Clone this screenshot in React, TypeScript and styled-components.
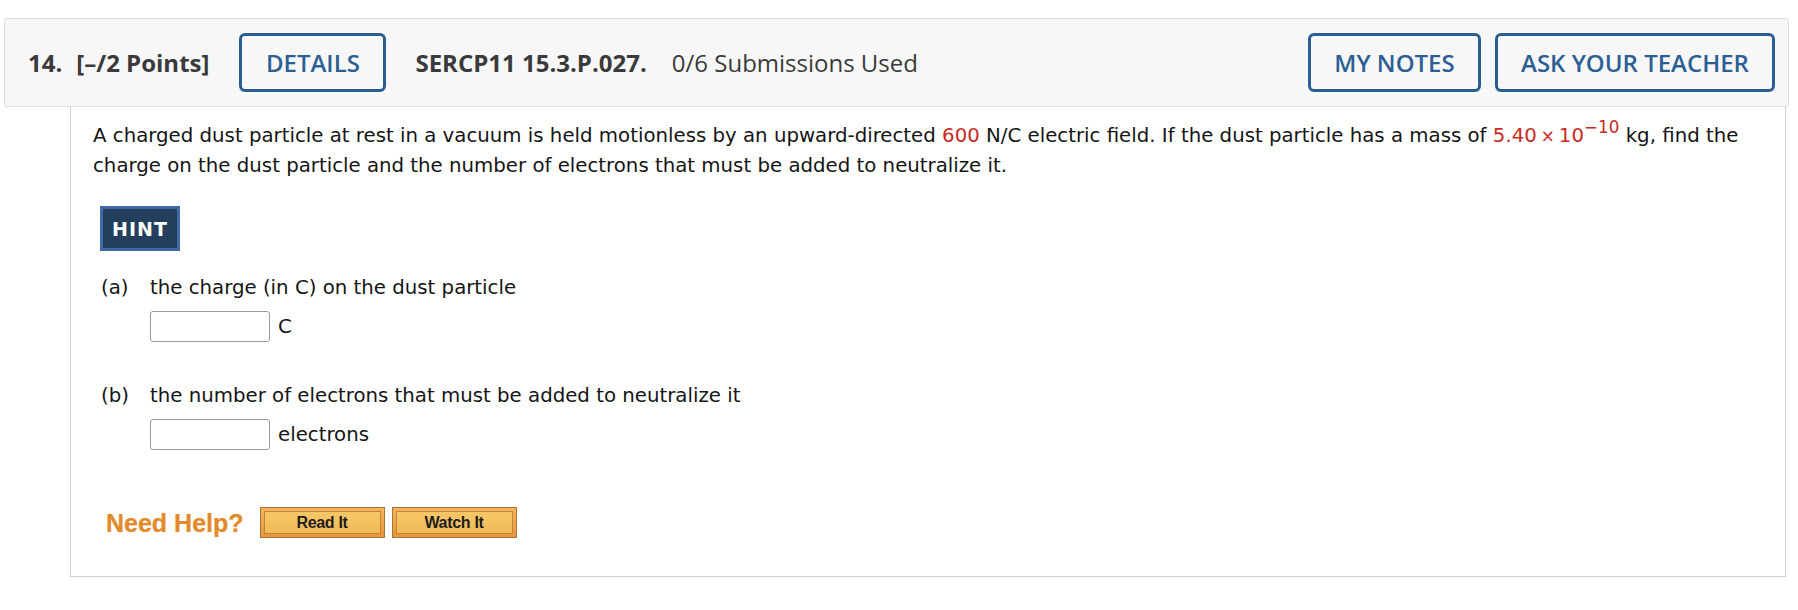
import styled, { createGlobalStyle } from "styled-components";

const GlobalStyle = createGlobalStyle`
  html, body {
    margin: 0;
    padding: 0;
    background: #ffffff;
  }
  * {
    box-sizing: border-box;
  }
`;

const Page = styled.div`
  padding: 18px 9px 0 4px;
`;

const QuestionHeader = styled.header`
  height: 89px;
  display: flex;
  align-items: center;
  padding: 0 13px 0 23px;
  background-color: #f7f7f7;
  border: 1px solid #dedede;
  border-radius: 3px;
  font-family: "Open Sans", sans-serif;
  font-size: 24px;
  color: #3a3a3a;
`;

const Strong = styled.span<{ $gap?: number }>`
  font-weight: 700;
  margin-right: ${(p) => p.$gap ?? 0}px;
  white-space: nowrap;
`;

const Plain = styled.span`
  font-weight: 400;
  white-space: nowrap;
`;

const Spacer = styled.div`
  flex: 1;
`;

const OutlineButton = styled.button<{ $width: number; $gap?: number }>`
  width: ${(p) => p.$width}px;
  height: 59px;
  margin-right: ${(p) => p.$gap ?? 0}px;
  padding: 0;
  background: transparent;
  border: 3px solid #2b5f94;
  border-radius: 6px;
  color: #2b5f94;
  font-family: "Open Sans", sans-serif;
  font-size: 24px;
  font-weight: 600;
  cursor: pointer;
`;

const QuestionBody = styled.section`
  margin: 0 3px 0 66px;
  padding: 14px 22px 38px 22px;
  border: 1px solid #cfcfcf;
  border-top: none;
  font-family: Verdana, "DejaVu Sans", sans-serif;
  font-size: 19.75px;
  line-height: 30px;
  color: #151515;
`;

const Prompt = styled.p`
  margin: 0;
`;

const Value = styled.span`
  color: #cc2a1f;
`;

const Times = styled.span`
  font-size: 0.85em;
  margin: 0 4px;
`;

const Sup = styled.sup`
  font-size: 0.85em;
  line-height: 0;
  vertical-align: 0.55em;
`;

const HintButton = styled.button`
  display: block;
  width: 80px;
  height: 45px;
  margin: 25px 0 22px 7px;
  padding: 0;
  background-color: #243f5e;
  border: 3px solid #3e6aa6;
  color: #ffffff;
  font-family: Verdana, "DejaVu Sans", sans-serif;
  font-size: 19px;
  font-weight: 700;
  letter-spacing: 1px;
  cursor: pointer;
`;

const Part = styled.div<{ $gap?: number }>`
  margin-bottom: ${(p) => p.$gap ?? 0}px;
`;

const PartLabel = styled.div`
  display: flex;
  padding-left: 8px;
`;

const PartLetter = styled.span`
  width: 49px;
  flex-shrink: 0;
`;

const AnswerRow = styled.div`
  display: flex;
  align-items: center;
  gap: 8px;
  margin: 8px 0 0 57px;
`;

const AnswerInput = styled.input`
  width: 120px;
  height: 31px;
  border: 1px solid #9a9a9a;
  border-radius: 3px;
  background: #ffffff;
  font-size: 18px;
`;

const HelpRow = styled.div`
  display: flex;
  align-items: center;
  gap: 7px;
  margin-left: 13px;
`;

const HelpLabel = styled.span`
  margin-right: 9px;
  font-family: Arial, "Liberation Sans", sans-serif;
  font-size: 25px;
  font-weight: 700;
  color: #e38a2c;
  text-shadow: 0 0 1px rgba(227, 138, 44, 0.5);
`;

const HelpButton = styled.button`
  width: 125px;
  height: 31px;
  padding: 3px;
  background: linear-gradient(#f5b55a, #e8943a);
  border: 1px solid #a8743a;
  cursor: pointer;
`;

const HelpButtonFace = styled.span`
  display: flex;
  align-items: center;
  justify-content: center;
  height: 100%;
  background: linear-gradient(#f6c767, #f1bb58);
  border: 1px solid #c4843c;
  font-family: Arial, "Liberation Sans", sans-serif;
  font-size: 16px;
  font-weight: 700;
  letter-spacing: -0.3px;
  color: #1e1e1e;
`;

export default function App() {
  return (
    <Page>
      <GlobalStyle />
      <QuestionHeader>
        <Strong $gap={14}>14.</Strong>
        <Strong $gap={30}>[–/2 Points]</Strong>
        <OutlineButton $width={147} $gap={29}>
          DETAILS
        </OutlineButton>
        <Strong $gap={25}>SERCP11 15.3.P.027.</Strong>
        <Plain>0/6 Submissions Used</Plain>
        <Spacer />
        <OutlineButton $width={173} $gap={14}>
          MY NOTES
        </OutlineButton>
        <OutlineButton $width={280}>ASK YOUR TEACHER</OutlineButton>
      </QuestionHeader>

      <QuestionBody>
        <Prompt>
          A charged dust particle at rest in a vacuum is held motionless by an
          upward-directed <Value>600</Value> N/C electric field. If the dust
          particle has a mass of{" "}
          <Value>
            5.40<Times>×</Times>10<Sup>−10</Sup>
          </Value>{" "}
          kg, find the charge on the dust particle and the number of electrons
          that must be added to neutralize it.
        </Prompt>

        <HintButton>HINT</HintButton>

        <Part $gap={39}>
          <PartLabel>
            <PartLetter>(a)</PartLetter>
            <span>the charge (in C) on the dust particle</span>
          </PartLabel>
          <AnswerRow>
            <AnswerInput type="text" />
            <span>C</span>
          </AnswerRow>
        </Part>

        <Part $gap={57}>
          <PartLabel>
            <PartLetter>(b)</PartLetter>
            <span>the number of electrons that must be added to neutralize it</span>
          </PartLabel>
          <AnswerRow>
            <AnswerInput type="text" />
            <span>electrons</span>
          </AnswerRow>
        </Part>

        <HelpRow>
          <HelpLabel>Need Help?</HelpLabel>
          <HelpButton>
            <HelpButtonFace>Read It</HelpButtonFace>
          </HelpButton>
          <HelpButton>
            <HelpButtonFace>Watch It</HelpButtonFace>
          </HelpButton>
        </HelpRow>
      </QuestionBody>
    </Page>
  );
}
